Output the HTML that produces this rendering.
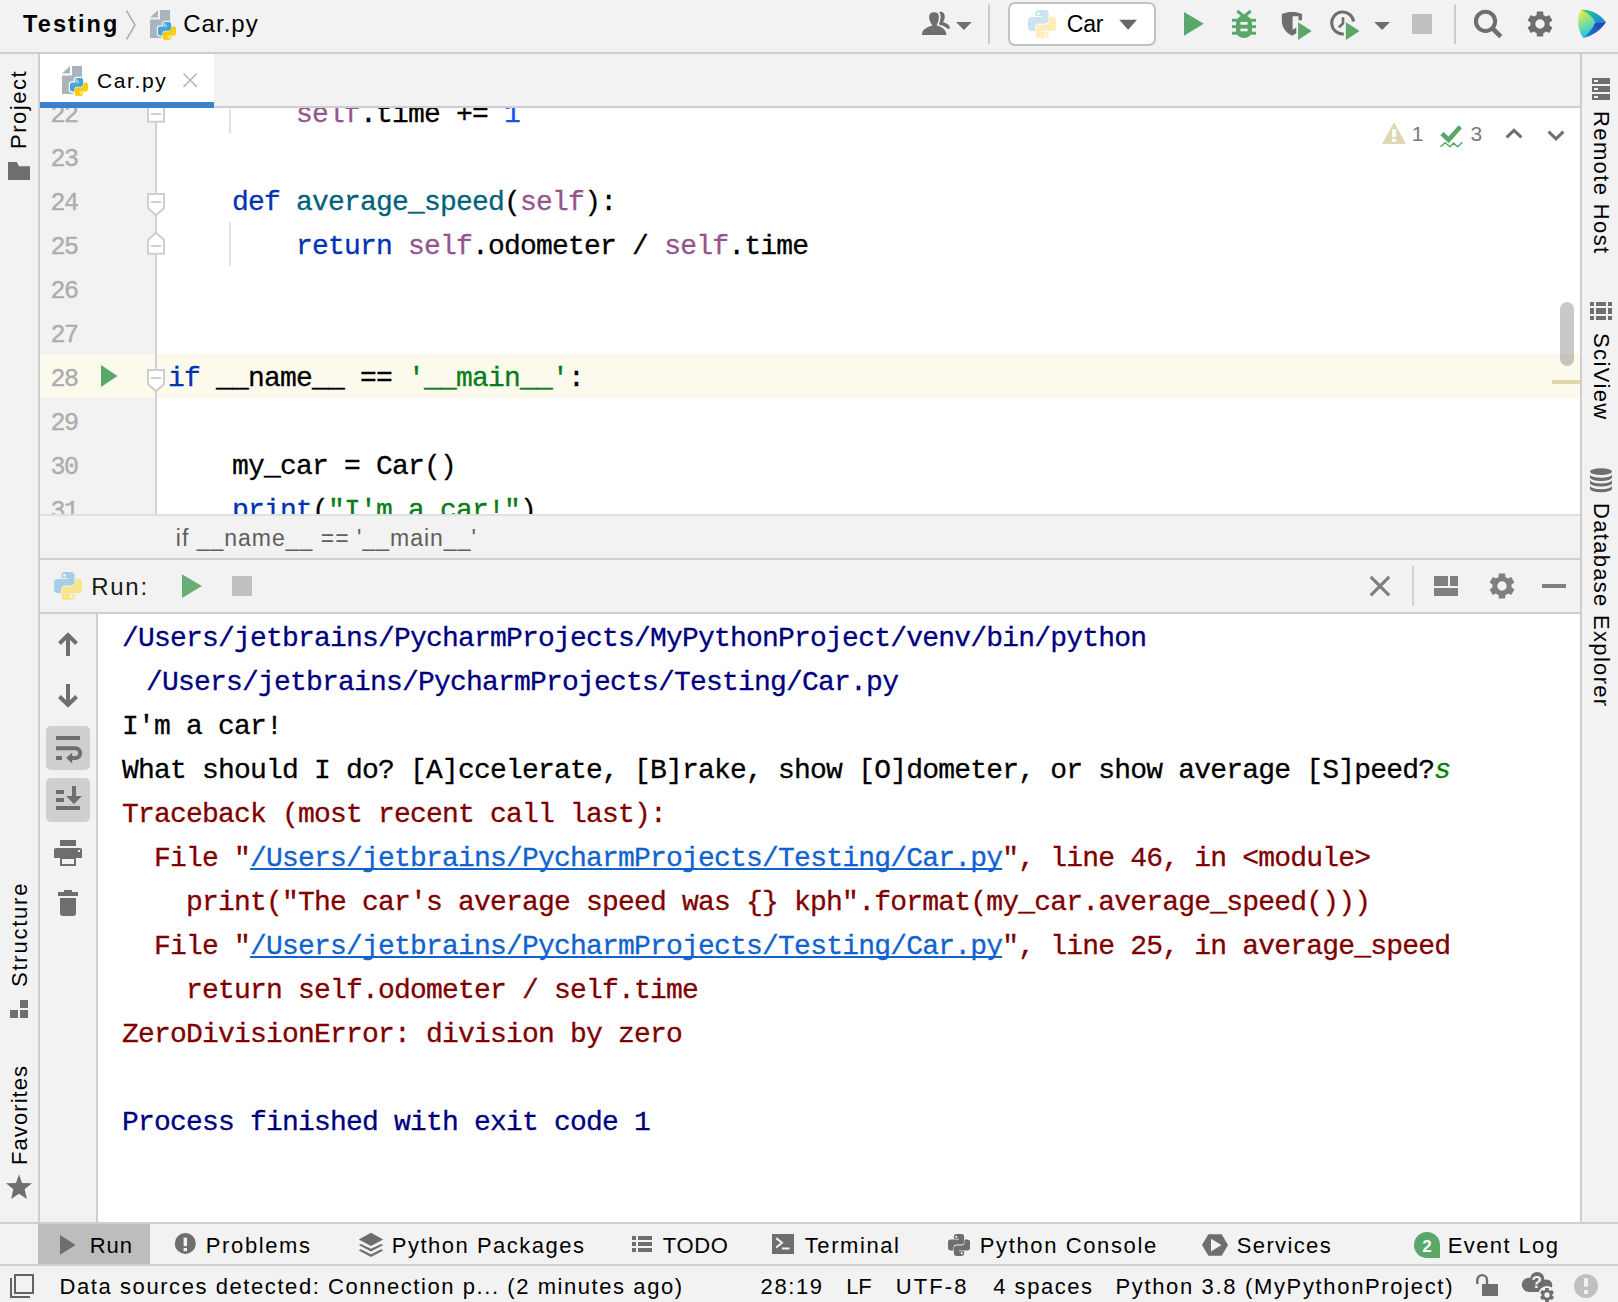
<!DOCTYPE html>
<html lang="en">
<head>
<meta charset="utf-8">
<title>Car.py - Testing</title>
<style>
*{box-sizing:border-box;margin:0;padding:0}
html,body{width:1618px;height:1302px;overflow:hidden;background:#f2f2f2}
body{position:relative;font-family:"Liberation Sans",sans-serif;color:#000;font-size:24px}
.abs{position:absolute}
.ui{z-index:2;position:absolute;white-space:nowrap;font-family:"Liberation Sans",sans-serif;font-size:24px;line-height:30px;color:#000;letter-spacing:1px}
.mono{position:absolute;white-space:pre;font-family:"Liberation Mono",monospace;font-size:28px;letter-spacing:-0.8px;line-height:47.3px;height:44px;color:#000;-webkit-text-stroke:0.3px currentColor}
.hl{position:absolute;background:#cecece}
.vtext{z-index:2;position:absolute;white-space:nowrap;font-family:"Liberation Sans",sans-serif;font-size:24px;line-height:30px;letter-spacing:1px;transform-origin:0 0}
svg{position:absolute;overflow:visible}
/* editor */
#editor{position:absolute;left:40px;top:108px;width:1540px;height:406px;background:#fff;overflow:hidden}
#gutter{position:absolute;left:0;top:0;width:115px;height:407px;background:#f2f2f2}
.ln{color:#adadad;line-height:49px;font-size:25px;letter-spacing:-1.5px;-webkit-text-stroke:0.4px currentColor}
.kw{color:#0033b3}.sf{color:#94558d}.fn{color:#00627a}.nm{color:#1750eb}.st{color:#067d17}
/* console */
#console{position:absolute;left:98px;top:614px;width:1482px;height:608px;background:#fff;overflow:hidden}
.sys{color:#00007f}.err{color:#7f0000}.lnk{color:#1062d0;text-decoration:underline;text-decoration-thickness:2px;text-underline-offset:1.5px;text-decoration-skip-ink:none}.inp{color:#007f00;font-style:italic}
.pb{fill:var(--b,#3f9fd5)}.py{fill:var(--y,#fdcb0b)}
#gear path{fill:var(--g,#6e6e6e)}
</style>
</head>
<body>
<!-- ===== top navigation bar ===== -->
<div id="navbar" class="abs" style="left:0;top:0;width:1618px;height:52px;background:#f2f2f2"></div>
<div class="hl" style="left:0;top:52px;width:1618px;height:2px"></div>

<!-- ===== left / right stripes ===== -->
<div class="hl" style="left:38px;top:54px;width:2px;height:1168px"></div>
<div class="hl" style="left:1580px;top:54px;width:2px;height:1168px"></div>

<!-- ===== editor tabs ===== -->
<div id="tab" class="abs" style="left:40px;top:54px;width:174px;height:48px;background:#fff"></div>
<div class="hl" style="left:40px;top:106px;width:1540px;height:2px"></div>
<div class="abs" style="left:40px;top:102px;width:174px;height:6px;background:#3d7fcf"></div>

<!-- ===== editor ===== -->
<div id="editor">
  <div id="gutter"></div>
  <div class="abs" style="left:115px;top:0;width:2px;height:407px;background:#d1d1d1"></div>
  <div class="abs" style="left:0;top:246px;width:1540px;height:44px;background:#fcfaed"></div>
  <div class="abs" style="left:115px;top:246px;width:2px;height:44px;background:#d1d1d1"></div>
  <div class="abs" style="left:189px;top:0;width:2px;height:26px;background:#e3e3e3"></div>
  <div class="abs" style="left:189px;top:114px;width:2px;height:44px;background:#e3e3e3"></div>
  <div class="mono ln" id="ln22" style="left:10.5px;top:-17px">22</div>
  <div class="mono ln" id="ln23" style="left:10.5px;top:27px">23</div>
  <div class="mono ln" id="ln24" style="left:10.5px;top:71px">24</div>
  <div class="mono ln" id="ln25" style="left:10.5px;top:115px">25</div>
  <div class="mono ln" id="ln26" style="left:10.5px;top:159px">26</div>
  <div class="mono ln" id="ln27" style="left:10.5px;top:203px">27</div>
  <div class="mono ln" id="ln28" style="left:10.5px;top:247px">28</div>
  <div class="mono ln" id="ln29" style="left:10.5px;top:291px">29</div>
  <div class="mono ln" id="ln30" style="left:10.5px;top:335px">30</div>
  <div class="mono ln" id="ln31" style="left:10.5px;top:379px">31</div>
  <div class="mono" style="left:128px;top:-17px">        <span class="sf">self</span>.time += <span class="nm">1</span></div>
  <div class="mono" style="left:128px;top:71px">    <span class="kw">def</span> <span class="fn">average_speed</span>(<span class="sf">self</span>):</div>
  <div class="mono" style="left:128px;top:115px">        <span class="kw">return</span> <span class="sf">self</span>.odometer / <span class="sf">self</span>.time</div>
  <div class="mono" style="left:128px;top:247px"><span class="kw">if</span> __name__ == <span class="st">'__main__'</span>:</div>
  <div class="mono" style="left:128px;top:335px">    my_car = Car()</div>
  <div class="mono" style="left:128px;top:379px">    <span class="kw">print</span>(<span class="st">"I'm a car!"</span>)</div>
<svg width="1540" height="406" viewBox="0 0 1540 406" style="left:0;top:0"><path d="M108,13.8 H124 V0 L116,-7.3 L108,0 Z" fill="#fff" stroke="#cfcfcf" stroke-width="2"/><rect x="111" y="5" width="10" height="2" fill="#cfcfcf"/><path d="M108,86 H124 V100 L116,107.3 L108,100 Z" fill="#fff" stroke="#cfcfcf" stroke-width="2"/><rect x="111" y="93" width="10" height="2" fill="#cfcfcf"/><path d="M108,145.8 H124 V132 L116,124.7 L108,132 Z" fill="#fff" stroke="#cfcfcf" stroke-width="2"/><rect x="111" y="137" width="10" height="2" fill="#cfcfcf"/><path d="M108,262 H124 V276 L116,283.3 L108,276 Z" fill="#fff" stroke="#cfcfcf" stroke-width="2"/><rect x="111" y="269" width="10" height="2" fill="#cfcfcf"/><path d="M61,257 V279 L77.5,268 Z" fill="#59a869"/>
<path d="M1354,14.300L1366,36H1342Z" fill="#dfd6b3"/>
<rect x="1352" y="21.300" width="4.200" height="7.700" fill="#fff"/><rect x="1352" y="30.700" width="4.200" height="3.100" fill="#fff"/>
<path d="M1402,25.500L1408.600,32L1420.300,18.800" fill="none" stroke="#59a869" stroke-width="4.600"/>
<path d="M1400.500,38.800L1405.200,34.700L1410,38.800L1413.600,35.100L1417.700,38.800L1422.300,34.200" fill="none" stroke="#59a869" stroke-width="1.500"/>
<path d="M1466.600,29.300L1474,22.300L1481.400,29.300" fill="none" stroke="#6e6e6e" stroke-width="3"/>
<path d="M1508.600,23.600L1516,30.900L1523.400,23.600" fill="none" stroke="#6e6e6e" stroke-width="3"/>
<rect x="1520" y="194" width="14" height="64" rx="7" ry="7" fill="#000" fill-opacity="0.21"/>
<rect x="1512" y="272" width="28" height="4" fill="#e0d7ad"/>
</svg>
</div>

<!-- ===== breadcrumbs ===== -->
<div class="abs" style="left:40px;top:514px;width:1540px;height:2px;background:#e0e0e0"></div>
<div class="hl" style="left:40px;top:558px;width:1540px;height:2px"></div>

<!-- ===== run tool window ===== -->
<div class="hl" style="left:40px;top:612px;width:1540px;height:2px"></div>
<div class="hl" style="left:96px;top:614px;width:2px;height:608px"></div>
<div id="console">
  <div class="mono sys" style="left:24px;top:1px">/Users/jetbrains/PycharmProjects/MyPythonProject/venv/bin/python</div>
  <div class="mono sys" style="left:48px;top:45px">/Users/jetbrains/PycharmProjects/Testing/Car.py</div>
  <div class="mono " style="left:24px;top:89px">I'm a car!</div>
  <div class="mono " style="left:24px;top:133px">What should I do? [A]ccelerate, [B]rake, show [O]dometer, or show average [S]peed?<span class="inp">s</span></div>
  <div class="mono err" style="left:24px;top:177px">Traceback (most recent call last):</div>
  <div class="mono err" style="left:24px;top:221px">  File "<span class="lnk">/Users/jetbrains/PycharmProjects/Testing/Car.py</span>", line 46, in &lt;module&gt;</div>
  <div class="mono err" style="left:24px;top:265px">    print("The car's average speed was {} kph".format(my_car.average_speed()))</div>
  <div class="mono err" style="left:24px;top:309px">  File "<span class="lnk">/Users/jetbrains/PycharmProjects/Testing/Car.py</span>", line 25, in average_speed</div>
  <div class="mono err" style="left:24px;top:353px">    return self.odometer / self.time</div>
  <div class="mono err" style="left:24px;top:397px">ZeroDivisionError: division by zero</div>
  <div class="mono sys" style="left:24px;top:485px">Process finished with exit code 1</div>
</div>

<!-- ===== bottom bars ===== -->
<div class="hl" style="left:0;top:1222px;width:1618px;height:2px"></div>
<div class="hl" style="left:0;top:1264px;width:1618px;height:2px"></div>

<!-- ===== UI TEXT ===== -->
<div id="t_testing" class="ui" style="left:23.0px;top:9px;font-weight:bold;font-size:23.5px;letter-spacing:2.10px">Testing</div>
<div id="t_navcar" class="ui" style="left:183.2px;top:9.3px;font-size:24px;letter-spacing:1.04px">Car.py</div>
<div id="t_tabcar" class="ui" style="left:97.0px;top:65.5px;font-size:21px;letter-spacing:1.60px">Car.py</div>
<div id="t_cfg" class="ui" style="left:1066.8px;top:9px;font-size:23px;letter-spacing:-0.20px">Car</div>
<div id="t_w1" class="ui" style="left:1411.8px;top:119px;font-size:21px;color:#7a7a7a;letter-spacing:1.00px">1</div>
<div id="t_w3" class="ui" style="left:1470.6px;top:119px;font-size:21px;color:#7a7a7a;letter-spacing:1.00px">3</div>
<div id="t_crumb" class="ui" style="left:175.8px;top:523px;font-size:23px;color:#5e5e5e;letter-spacing:1.00px">if __name__ == '__main__'</div>
<div id="t_run" class="ui" style="left:91.2px;top:572.4px;font-size:24px;color:#1a1a1a;letter-spacing:1.74px">Run:</div>
<div id="t_bRun" class="ui" style="left:89.8px;top:1230.5px;font-size:22px;letter-spacing:0.90px">Run</div>
<div id="t_bProblems" class="ui" style="left:205.8px;top:1230.5px;font-size:22px;letter-spacing:1.62px">Problems</div>
<div id="t_bPkg" class="ui" style="left:391.8px;top:1230.5px;font-size:22px;letter-spacing:1.50px">Python Packages</div>
<div id="t_bTodo" class="ui" style="left:662.8px;top:1230.5px;font-size:22px;letter-spacing:0.66px">TODO</div>
<div id="t_bTerm" class="ui" style="left:804.8px;top:1230.5px;font-size:22px;letter-spacing:1.57px">Terminal</div>
<div id="t_bCons" class="ui" style="left:979.8px;top:1230.5px;font-size:22px;letter-spacing:1.62px">Python Console</div>
<div id="t_bSvc" class="ui" style="left:1236.8px;top:1230.5px;font-size:22px;letter-spacing:1.36px">Services</div>
<div id="t_bEvt" class="ui" style="left:1447.8px;top:1230.5px;font-size:22px;letter-spacing:1.38px">Event Log</div>
<div id="t_sMsg" class="ui" style="left:59.6px;top:1272px;font-size:22px;letter-spacing:1.57px">Data sources detected: Connection p... (2 minutes ago)</div>
<div id="t_sPos" class="ui" style="left:760.6px;top:1272px;font-size:22px;letter-spacing:1.58px">28:19</div>
<div id="t_sLF" class="ui" style="left:846.2px;top:1272px;font-size:22px;letter-spacing:-0.20px">LF</div>
<div id="t_sEnc" class="ui" style="left:895.8px;top:1272px;font-size:22px;letter-spacing:2.08px">UTF-8</div>
<div id="t_sInd" class="ui" style="left:993.2px;top:1272px;font-size:22px;letter-spacing:1.53px">4 spaces</div>
<div id="t_sPy" class="ui" style="left:1115.4px;top:1272px;font-size:22px;letter-spacing:1.66px">Python 3.8 (MyPythonProject)</div>
<div id="t_vProject" class="vtext" style="left:3.6px;top:149.1px;font-size:22px;transform:rotate(-90deg);letter-spacing:1.52px">Project</div>
<div id="t_vStructure" class="vtext" style="left:4.6px;top:987.2px;font-size:22px;transform:rotate(-90deg);letter-spacing:1.77px">Structure</div>
<div id="t_vFavorites" class="vtext" style="left:4.6px;top:1164.8px;font-size:22px;transform:rotate(-90deg);letter-spacing:1.08px">Favorites</div>
<div id="t_vRemote" class="vtext" style="left:1615.8px;top:110.6px;font-size:22px;transform:rotate(90deg);letter-spacing:1.38px">Remote Host</div>
<div id="t_vSci" class="vtext" style="left:1615.8px;top:332.6px;font-size:22px;transform:rotate(90deg);letter-spacing:1.40px">SciView</div>
<div id="t_vDb" class="vtext" style="left:1615.8px;top:502.9px;font-size:22px;transform:rotate(90deg);letter-spacing:1.31px">Database Explorer</div>

<!-- ===== ICON OVERLAY ===== -->
<svg id="icons" width="1618" height="1302" viewBox="0 0 1618 1302" style="left:0;top:0;pointer-events:none">
<defs>
  <g id="pylogo">
    <path class="pb" d="M7.5,7V3.5Q7.5,0 11,0H17Q20.5,0 20.5,3.5V10Q20.5,13.5 17,13.5H11Q7,13.5 7,17.5V21H3.5Q0,21 0,17.5V10.5Q0,7 3.5,7H14V6H7.5Z"/>
    <path class="py" d="M7.5,7V3.5Q7.5,0 11,0H17Q20.5,0 20.5,3.5V10Q20.5,13.5 17,13.5H11Q7,13.5 7,17.5V21H3.5Q0,21 0,17.5V10.5Q0,7 3.5,7H14V6H7.5Z" transform="rotate(180 14 14)"/>
    <circle cx="10.5" cy="3.5" r="1.3" fill="#fff"/>
    <circle cx="17.5" cy="24.5" r="1.3" fill="#fff"/>
  </g>
  <g id="fileicon">
    <path d="M4,9.6L12,2V9.6Z" fill="#aab4bc"/>
    <path d="M14,2H24V30H4V11.6H14Z" fill="#aab4bc"/>
    <g transform="translate(12,14) scale(0.643)">
      <path d="M7.5,7V3.5Q7.5,0 11,0H17Q20.5,0 20.5,3.5V10Q20.5,13.5 17,13.5H11Q7,13.5 7,17.5V21H3.5Q0,21 0,17.5V10.5Q0,7 3.5,7H14V6H7.5Z" fill="none" stroke="#f2f2f2" stroke-width="4" class="halo" style="stroke:var(--h,#f2f2f2)"/>
      <path d="M7.5,7V3.5Q7.5,0 11,0H17Q20.5,0 20.5,3.5V10Q20.5,13.5 17,13.5H11Q7,13.5 7,17.5V21H3.5Q0,21 0,17.5V10.5Q0,7 3.5,7H14V6H7.5Z" fill="none" stroke="#f2f2f2" stroke-width="4" class="halo" style="stroke:var(--h,#f2f2f2)" transform="rotate(180 14 14)"/>
      <path d="M7.5,7V3.5Q7.5,0 11,0H17Q20.5,0 20.5,3.5V10Q20.5,13.5 17,13.5H11Q7,13.5 7,17.5V21H3.5Q0,21 0,17.5V10.5Q0,7 3.5,7H14V6H7.5Z" fill="#45a5d6"/>
      <path d="M7.5,7V3.5Q7.5,0 11,0H17Q20.5,0 20.5,3.5V10Q20.5,13.5 17,13.5H11Q7,13.5 7,17.5V21H3.5Q0,21 0,17.5V10.5Q0,7 3.5,7H14V6H7.5Z" fill="#fdcb0b" transform="rotate(180 14 14)"/>
      <circle cx="10.5" cy="3.5" r="1.4" fill="#e8f4fb"/>
      <circle cx="17.5" cy="24.5" r="1.4" fill="#fff6d0"/>
    </g>
  </g>

  <linearGradient id="gLeft" x1="0" y1="0" x2="0.350" y2="1"><stop offset="0" stop-color="#fcf030"/><stop offset="0.500" stop-color="#8ee08c"/><stop offset="1" stop-color="#1cc4ea"/></linearGradient>
  <linearGradient id="gTop" x1="0" y1="0" x2="1" y2="0.600"><stop offset="0" stop-color="#2fd86a"/><stop offset="1" stop-color="#148ce0"/></linearGradient>
  <linearGradient id="gBot" x1="1" y1="0" x2="0" y2="1"><stop offset="0" stop-color="#1c3fa8"/><stop offset="1" stop-color="#128ae0"/></linearGradient>
  <g id="gear">
    <path fill-rule="evenodd" d="M-3.38,-8.98L-3.19,-12.50L3.19,-12.50L3.38,-8.98A9.60,9.60 0 0 1 6.09,-7.42L9.23,-9.01L12.42,-3.49L9.47,-1.56A9.60,9.60 0 0 1 9.47,1.56L12.42,3.49L9.23,9.01L6.09,7.42A9.60,9.60 0 0 1 3.38,8.98L3.19,12.50L-3.19,12.50L-3.38,8.98A9.60,9.60 0 0 1 -6.09,7.42L-9.23,9.01L-12.42,3.49L-9.47,1.56A9.60,9.60 0 0 1 -9.47,-1.56L-12.42,-3.49L-9.23,-9.01L-6.09,-7.42A9.60,9.60 0 0 1 -3.38,-8.98ZM4.70,0A4.70,4.70 0 1 0 -4.70,0A4.70,4.70 0 1 0 4.70,0Z"/>
  </g>
</defs>

<!-- nav bar -->
<path d="M126.5,10.5L135,25L126.5,39.5" fill="none" stroke="#aab2b9" stroke-width="1.6"/>
<use href="#fileicon" x="146" y="8"/>
<g id="tabicon" transform="translate(58,64)"><use href="#fileicon" style="--h:#fff"/></g>
<path d="M183.5,73.5L196.8,86.8M196.8,73.5L183.5,86.8" stroke="#b4bbc1" stroke-width="1.7" fill="none"/>
<!-- people -->
<g fill="#6e6e6e">
<path d="M922,34.9C922,29.5 926,27.6 932.5,25.6C929.5,21.5 929,18 929.2,16.5C929.5,13 931.5,12.2 934,12.2C936.8,12.2 938.9,13.6 938.9,17C938.9,20 937.8,23 936.6,25.2C942,27 946.4,29.5 946.4,34.9Z"/>
<path d="M939,11.9C942.5,11.3 944.8,13 944.8,16.5C944.8,18.5 944,20.5 943,22C946,23.2 950,24.6 950,28.7H947.5C946,27 942.5,25.6 938.8,24.6C940,21.5 940.8,18.5 940.6,16C940.5,14 939.8,12.8 939,11.9Z"/>
<path d="M956,22H971.8L963.9,30Z"/>
</g>
<rect x="988" y="4.5" width="2" height="39.5" fill="#cbcbcb"/>
<rect x="1009" y="3" width="146" height="42" rx="6" ry="6" fill="#fff" stroke="#c2c2c2" stroke-width="2"/>
<g transform="translate(1028,10)"><use href="#pylogo" style="--b:#cbe4f2;--y:#fdeebb"/></g>
<path d="M1119.2,19.8H1137L1128.1,29.8Z" fill="#666"/>
<!-- run -->
<path d="M1184,12V35.8L1203.8,23.8Z" fill="#59a869"/>
<!-- bug -->
<g fill="#59a869">
<path d="M1236,24.5C1236,18.5 1239.5,15.4 1244,15.4C1248.500,15.4 1252,18.5 1252,24.5V30C1252,35 1248.500,38 1244,38C1239.500,38 1236,35 1236,30Z"/>
<rect x="1232" y="18.8" width="24" height="2.9"/><rect x="1232" y="25.2" width="24" height="2.9"/><rect x="1232" y="31.7" width="24" height="3"/>
<path d="M1237.300,11L1244,16.500L1250.700,11" fill="none" stroke="#59a869" stroke-width="3"/>
</g>
<rect x="1240.400" y="22" width="7.200" height="2.700" fill="#f2f2f2"/><rect x="1240.400" y="28.600" width="7.200" height="2.700" fill="#f2f2f2"/>
<!-- coverage -->
<path d="M1281.800,14C1285,12.500 1288.500,11.900 1292.200,11.900C1295.800,11.900 1299,12.500 1302,14V20.300H1298.500V16.300H1292.600V29.700L1296.300,27.500V33.200L1292.200,35.800C1285,32 1281.800,27 1281.800,20Z" fill="#6e6e6e"/>
<path d="M1298.100,22.300V40L1311.700,31.100Z" fill="#59a869"/>
<!-- profile -->
<path d="M1353.600,21.500A11,11 0 1 0 1343.800,33.900" fill="none" stroke="#6e6e6e" stroke-width="3"/>
<path d="M1343,17.300V23.500L1338.800,27.400" fill="none" stroke="#6e6e6e" stroke-width="2.600"/>
<path d="M1345.900,22.300V40L1359.600,31.100Z" fill="#59a869"/>
<path d="M1374.200,22H1390L1382.100,30Z" fill="#6e6e6e"/>
<rect x="1412" y="14" width="20" height="20" fill="#c0c0c0"/>
<rect x="1454" y="4.500" width="2" height="39.500" fill="#cbcbcb"/>
<!-- search -->
<circle cx="1485.500" cy="21.300" r="9.600" fill="none" stroke="#6e6e6e" stroke-width="4"/>
<path d="M1492.500,28.300L1500.800,36.600" stroke="#6e6e6e" stroke-width="4.600" fill="none"/>
<!-- gear -->
<g id="gearnav" transform="translate(1540,24)"><use href="#gear"/></g>
<!-- space logo -->
<path d="M1581,9.800C1577,16 1577,30 1583.200,37.900C1589,33 1593,28 1595.300,22.300C1592,16.500 1587,12.500 1581,9.800Z" fill="url(#gLeft)"/>
<path d="M1581,9.800C1591,9 1600,14 1606,22.300H1595.300C1592,16.500 1587,12.500 1581,9.800Z" fill="url(#gTop)"/>
<path d="M1606,22.300C1601,30 1592,36.500 1583.200,37.900C1589,33 1593,28 1595.300,22.300Z" fill="url(#gBot)"/>

<!-- right stripe icons -->
<g fill="#6e6e6e">
<rect x="1592" y="78" width="18" height="6"/><rect x="1592" y="86" width="18" height="6"/><rect x="1592" y="94" width="18" height="6"/>
<g fill="#f2f2f2"><rect x="1594" y="80" width="4" height="2"/><rect x="1594" y="88" width="4" height="2"/><rect x="1594" y="96" width="4" height="2"/></g>
<rect x="1590" y="302" width="4" height="4"/><rect x="1596" y="302" width="10" height="4"/><rect x="1608" y="302" width="4" height="4"/>
<rect x="1590" y="308" width="4" height="6"/><rect x="1596" y="308" width="10" height="6"/><rect x="1608" y="308" width="4" height="6"/>
<rect x="1590" y="316" width="4" height="4"/><rect x="1596" y="316" width="10" height="4"/><rect x="1608" y="316" width="4" height="4"/>
<ellipse cx="1601" cy="471.700" rx="11" ry="3.400"/>
<path d="M1590,474.400A11,3.400 0 0 0 1612,474.400V477.500A11,3.400 0 0 1 1590,477.500Z"/>
<path d="M1590,480.100A11,3.400 0 0 0 1612,480.100V483.200A11,3.400 0 0 1 1590,483.200Z"/>
<path d="M1590,485.800A11,3.400 0 0 0 1612,485.800V488.900A11,3.400 0 0 1 1590,488.900Z"/>
<!-- left stripe icons -->
<path d="M8,162H16.700L19,166.200H30V180H8Z"/>
<rect x="20" y="1000" width="8" height="8"/><rect x="10" y="1010" width="8" height="8"/><rect x="20" y="1010" width="8" height="8"/>
<path d="M19,1174.300L22,1182.900L32,1183.200L24.600,1189.300L26.900,1198.900L19,1193.800L11.100,1198.900L13.300,1189.300L6,1183.200L16,1182.900Z"/>
</g>
<!-- run toolbar -->
<g transform="translate(54,572)"><use href="#pylogo" style="--b:#a6cfe7;--y:#f9e48c"/></g>
<path d="M182,574.200V598.100L201.900,586.100Z" fill="#69ae77"/>
<rect x="232" y="576" width="20" height="20" fill="#c0c0c0"/>
<path d="M1370.700,576.800L1389.200,595.300M1389.200,576.800L1370.700,595.300" stroke="#7f7f7f" stroke-width="3.200" fill="none"/>
<rect x="1412" y="566" width="2" height="40" fill="#d1d1d1"/>
<g fill="#7f7f7f">
<rect x="1434" y="576" width="14" height="10"/><rect x="1450" y="576" width="8" height="10"/><rect x="1434" y="588" width="24" height="8"/>
<rect x="1542" y="584" width="24" height="4"/>
</g>
<g transform="translate(1502,586)"><use href="#gear" style="--g:#7f7f7f"/></g>
<!-- console toolbar -->
<rect x="46" y="726" width="44" height="44" rx="5" fill="#cfcfcf"/>
<rect x="46" y="778" width="44" height="44" rx="5" fill="#cfcfcf"/>
<g fill="none" stroke="#6e6e6e" stroke-width="4">
<path d="M68,656V634.500M59.500,643.500L68,635L76.500,643.500"/>
<path d="M68,684V705.500M59.500,696.500L68,705L76.500,696.500"/>
<path d="M56,738H80"/>
<path d="M56,748.200H75.300A4.900,4.900 0 0 1 75.300,758H71.500"/>
<path d="M56,758H62"/>
<path d="M56,792H64M56,800H64M56,808H80M74,786V797"/>
</g>
<g fill="#6e6e6e">
<path d="M66.200,758L72.200,752.400V763.600Z"/>
<path d="M66.200,796H81.800L74,804.200Z"/>
<rect x="60" y="840" width="16" height="6"/>
<path d="M54,850Q54,848 56,848H80Q82,848 82,850V858H54Z"/>
<rect x="61" y="858" width="14" height="7" fill="none" stroke="#6e6e6e" stroke-width="2"/>
<rect x="78" y="850" width="2" height="2" fill="#f2f2f2"/>
<rect x="64" y="890" width="8" height="3"/><rect x="58" y="892" width="20" height="4"/>
<path d="M60,898H76V913Q76,916 73,916H63Q60,916 60,913Z"/>
</g>
<!-- bottom bar -->
<rect x="38" y="1224" width="112" height="40" fill="#bdbdbd"/>
<g fill="#6e6e6e">
<path d="M60,1235V1254.800L75.700,1244.900Z"/>
<circle cx="185.300" cy="1243.400" r="10.500"/>
<path d="M371,1232.800L383.200,1239.400L371,1245.900L358.800,1239.400Z"/>
<path d="M358.800,1245L360.800,1243.900L371,1248.800L381.200,1243.900L383.200,1245L371,1251.500Z"/>
<path d="M358.800,1250.400L360.800,1249.300L371,1254.200L381.200,1249.300L383.200,1250.400L371,1257.100Z"/>
<rect x="632" y="1236" width="4" height="4"/><rect x="638" y="1236" width="14" height="4"/>
<rect x="632" y="1242" width="4" height="4"/><rect x="638" y="1242" width="14" height="4"/>
<rect x="632" y="1248" width="4" height="4"/><rect x="638" y="1248" width="14" height="4"/>
<rect x="772" y="1234" width="22" height="20"/>
<path d="M1202,1245L1208.400,1234.300H1221.700L1228,1245L1221.700,1255.700H1208.400Z"/>
</g>
<rect x="183.600" y="1237.600" width="3.400" height="8.600" fill="#f2f2f2"/><rect x="183.600" y="1248" width="3.400" height="3.200" fill="#f2f2f2"/>
<path d="M776.200,1238.100L782,1242.800L776.200,1247.500" fill="none" stroke="#f2f2f2" stroke-width="2"/>
<rect x="782" y="1247.500" width="7.600" height="2" fill="#f2f2f2"/>
<path d="M1211,1238.700V1251.400L1221.400,1245Z" fill="#f2f2f2"/>
<g transform="translate(948,1234) scale(0.786)"><use href="#pylogo" style="--b:#6e6e6e;--y:#6e6e6e"/></g>
<path d="M1427,1232A13,13 0 0 1 1440,1245V1258H1427A13,13 0 0 1 1427,1232Z" fill="#59a869"/>
<!-- status bar -->
<rect x="15" y="1275" width="18" height="18" fill="none" stroke="#636363" stroke-width="2"/>
<path d="M11,1278V1297H30" fill="none" stroke="#636363" stroke-width="2"/>
<rect x="1482" y="1284" width="16" height="12" fill="#6e6e6e"/>
<path d="M1477.300,1284V1280A4.850,4.850 0 0 1 1487,1280V1284" fill="none" stroke="#6e6e6e" stroke-width="2.400"/>
<g fill="#6e6e6e">
<circle cx="1528.800" cy="1284.800" r="7"/><circle cx="1537.200" cy="1279.200" r="7.200"/><circle cx="1546.500" cy="1285.200" r="5.800"/>
<rect x="1528" y="1282" width="19" height="10"/>
</g>
<circle cx="1547" cy="1295" r="9" fill="#f2f2f2"/>
<g transform="translate(1547,1295) scale(0.560)"><use href="#gear"/></g>
<circle cx="1586" cy="1286" r="12" fill="#c0c0c0"/>
<rect x="1584" y="1278.200" width="4.100" height="8.400" fill="#f2f2f2"/><rect x="1584" y="1290" width="4.100" height="3.900" fill="#f2f2f2"/>
<!--ICONS-->
</svg>

<div id="t_badge" class="ui" style="left:1422.3px;top:1233.5px;font-size:17px;font-weight:bold;color:#fff;letter-spacing:0;line-height:26px">2</div>
<div id="t_q" class="ui" style="left:1531.6px;top:1270.3px;font-size:17px;font-weight:bold;color:#f2f2f2;letter-spacing:0;line-height:26px">?</div>
</body>
</html>
